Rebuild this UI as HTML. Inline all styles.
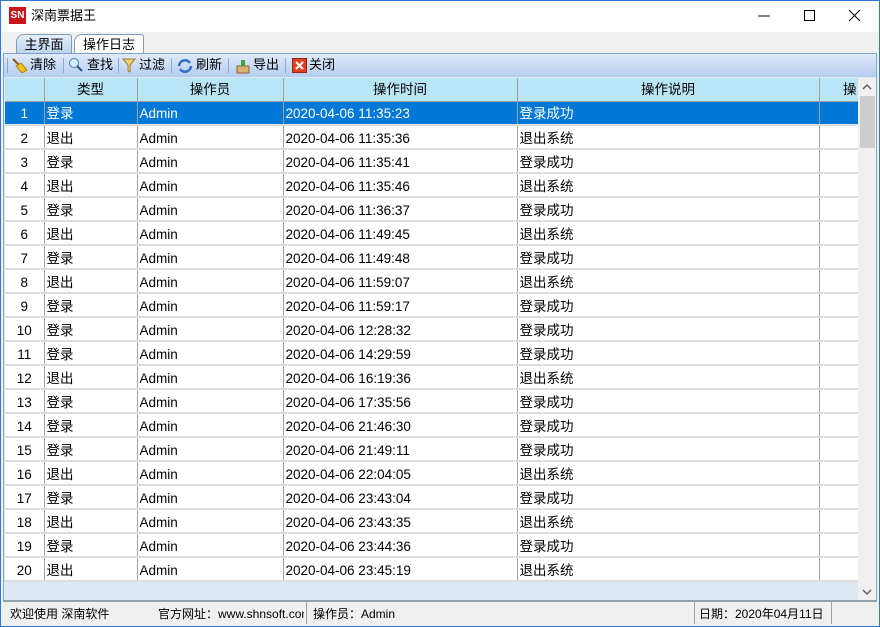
<!DOCTYPE html>
<html><head><meta charset="utf-8"><style>
*{margin:0;padding:0;box-sizing:border-box}
body{width:880px;height:627px;overflow:hidden;background:#f0f0f0;font-family:"Liberation Sans","Noto Sans CJK SC",sans-serif;font-size:13px;color:#000;position:relative}
.abs{position:absolute;line-height:16px}
#title{left:0;top:0;width:880px;height:32px;background:#fff;border:1px solid #2b79d0;border-bottom:none}
#frame{left:0;top:0;width:880px;height:627px;border:1px solid #2b79d0;pointer-events:none}
.logo{left:9px;top:7px;width:17px;height:17px;background:#c8161d;color:#fff;font-size:10px;font-weight:bold;line-height:17px;text-align:center}
.ttl{left:31px;top:8px;font-size:13px}
.tab{top:34px;height:20px;font-size:13px;line-height:20px;text-align:center;border:1px solid #7f9db9;border-bottom:none;border-radius:8px 3px 0 0}
#toolbar{left:3px;top:53px;width:874px;height:24px;background:linear-gradient(#dfeaf9,#b4cdf0);border:1px solid #7d9fd3;border-bottom:none}
.tb{top:57px;font-size:13px}
.sep{top:58px;width:1px;height:15px;background:#8ea8cc}
#grid{left:3px;top:77px;width:874px;height:524px;background:#dde8f2;border:1px solid #8a9fb8;border-top:none;overflow:hidden}
table{border-collapse:collapse;table-layout:fixed;position:absolute;left:1px;top:1px}
td{height:24px;border-right:1px solid #a0a0a0;border-bottom:2px solid #dcdcdc;background:#fff;padding:3px 2px 0;white-space:nowrap;overflow:hidden;font-size:13.5px;line-height:16px;vertical-align:middle}
td span{display:block;height:16px;line-height:16px;position:relative}
td span.c{top:0}
tr.h td{background:#b9e6f7;text-align:center;height:23px;border-bottom:1px solid #a0a0a0;padding-top:1px}
td.n{text-align:center}
tr.sel td{background:#0078d7;color:#fff}
#sb{left:858px;top:78px;width:18px;height:522px;background:#f0f0f0}
#status{left:3px;top:601px;width:874px;height:24px;border-top:1px solid #a0a0a0;background:#f0f0f0;font-size:12px}
.st{top:606px;font-size:12px}
.vs{top:602px;width:1px;height:22px;background:#a0a0a0}
</style></head><body>
<div id="title" class="abs"></div>
<div class="abs logo">SN</div>
<div class="abs ttl">深南票据王</div>
<svg class="abs" style="left:756px;top:8px" width="110" height="16"><line x1="2" y1="8" x2="14" y2="8" stroke="#000"/><rect x="48.5" y="2.5" width="10" height="10" fill="none" stroke="#000"/><path d="M93 2L104 13M104 2L93 13" stroke="#000"/></svg>
<div class="abs tab" style="left:16px;width:56px;background:linear-gradient(#e3eefb,#bcd3f0)">主界面</div>
<div class="abs tab" style="left:74px;width:70px;background:#fff;height:20px">操作日志</div>
<div id="toolbar" class="abs"></div>
<div class="abs sep" style="left:7px"></div>
<svg class="abs" style="left:11px;top:57px" width="18" height="16"><path d="M2 2L8 8" stroke="#8a5a20" stroke-width="2"/><path d="M5 9L10 6L16 13L11 16Z" fill="#f0c020" stroke="#b08000"/></svg>
<div class="abs tb" style="left:30px">清除</div>
<div class="abs sep" style="left:63px"></div>
<svg class="abs" style="left:68px;top:57px" width="16" height="16"><circle cx="6" cy="6" r="4.5" fill="#d8ecff" stroke="#4080c0"/><path d="M9 9L14 14" stroke="#305080" stroke-width="2"/></svg>
<div class="abs tb" style="left:87px">查找</div>
<div class="abs sep" style="left:118px"></div>
<svg class="abs" style="left:122px;top:58px" width="14" height="16"><path d="M1 1H13L8 7V14L6 13V7Z" fill="#f0d070" stroke="#a08030"/></svg>
<div class="abs tb" style="left:139px">过滤</div>
<div class="abs sep" style="left:171px"></div>
<svg class="abs" style="left:177px;top:58px" width="16" height="16"><path d="M2 8A6 6 0 0 1 13 5M14 8A6 6 0 0 1 3 11" fill="none" stroke="#3070c0" stroke-width="2.5"/></svg>
<div class="abs tb" style="left:196px">刷新</div>
<div class="abs sep" style="left:228px"></div>
<svg class="abs" style="left:235px;top:58px" width="16" height="16"><rect x="2" y="8" width="12" height="7" fill="#d8b070" stroke="#906030"/><path d="M6 8V2H10V8" fill="#40a040"/></svg>
<div class="abs tb" style="left:253px">导出</div>
<div class="abs sep" style="left:285px"></div>
<svg class="abs" style="left:292px;top:58px" width="15" height="15"><rect x="0.5" y="0.5" width="14" height="14" fill="#e04020" stroke="#a02010"/><path d="M4 4L11 11M11 4L4 11" stroke="#fff" stroke-width="2"/></svg>
<div class="abs tb" style="left:309px">关闭</div>
<div id="grid" class="abs">
<table>
<colgroup><col style="width:39px"><col style="width:93px"><col style="width:146px"><col style="width:234px"><col style="width:302px"><col style="width:40px"></colgroup>
<tr class="h"><td></td><td><span class="c">类型</span></td><td><span class="c">操作员</span></td><td><span class="c">操作时间</span></td><td><span class="c">操作说明</span></td><td style="text-align:right"><span class="c">操</span></td></tr>
<tr class="sel"><td class="n">1</td><td><span class="c">登录</span></td><td>Admin</td><td>2020-04-06 11:35:23</td><td><span class="c">登录成功</span></td><td></td></tr>
<tr><td class="n">2</td><td><span class="c">退出</span></td><td>Admin</td><td>2020-04-06 11:35:36</td><td><span class="c">退出系统</span></td><td></td></tr>
<tr><td class="n">3</td><td><span class="c">登录</span></td><td>Admin</td><td>2020-04-06 11:35:41</td><td><span class="c">登录成功</span></td><td></td></tr>
<tr><td class="n">4</td><td><span class="c">退出</span></td><td>Admin</td><td>2020-04-06 11:35:46</td><td><span class="c">退出系统</span></td><td></td></tr>
<tr><td class="n">5</td><td><span class="c">登录</span></td><td>Admin</td><td>2020-04-06 11:36:37</td><td><span class="c">登录成功</span></td><td></td></tr>
<tr><td class="n">6</td><td><span class="c">退出</span></td><td>Admin</td><td>2020-04-06 11:49:45</td><td><span class="c">退出系统</span></td><td></td></tr>
<tr><td class="n">7</td><td><span class="c">登录</span></td><td>Admin</td><td>2020-04-06 11:49:48</td><td><span class="c">登录成功</span></td><td></td></tr>
<tr><td class="n">8</td><td><span class="c">退出</span></td><td>Admin</td><td>2020-04-06 11:59:07</td><td><span class="c">退出系统</span></td><td></td></tr>
<tr><td class="n">9</td><td><span class="c">登录</span></td><td>Admin</td><td>2020-04-06 11:59:17</td><td><span class="c">登录成功</span></td><td></td></tr>
<tr><td class="n">10</td><td><span class="c">登录</span></td><td>Admin</td><td>2020-04-06 12:28:32</td><td><span class="c">登录成功</span></td><td></td></tr>
<tr><td class="n">11</td><td><span class="c">登录</span></td><td>Admin</td><td>2020-04-06 14:29:59</td><td><span class="c">登录成功</span></td><td></td></tr>
<tr><td class="n">12</td><td><span class="c">退出</span></td><td>Admin</td><td>2020-04-06 16:19:36</td><td><span class="c">退出系统</span></td><td></td></tr>
<tr><td class="n">13</td><td><span class="c">登录</span></td><td>Admin</td><td>2020-04-06 17:35:56</td><td><span class="c">登录成功</span></td><td></td></tr>
<tr><td class="n">14</td><td><span class="c">登录</span></td><td>Admin</td><td>2020-04-06 21:46:30</td><td><span class="c">登录成功</span></td><td></td></tr>
<tr><td class="n">15</td><td><span class="c">登录</span></td><td>Admin</td><td>2020-04-06 21:49:11</td><td><span class="c">登录成功</span></td><td></td></tr>
<tr><td class="n">16</td><td><span class="c">退出</span></td><td>Admin</td><td>2020-04-06 22:04:05</td><td><span class="c">退出系统</span></td><td></td></tr>
<tr><td class="n">17</td><td><span class="c">登录</span></td><td>Admin</td><td>2020-04-06 23:43:04</td><td><span class="c">登录成功</span></td><td></td></tr>
<tr><td class="n">18</td><td><span class="c">退出</span></td><td>Admin</td><td>2020-04-06 23:43:35</td><td><span class="c">退出系统</span></td><td></td></tr>
<tr><td class="n">19</td><td><span class="c">登录</span></td><td>Admin</td><td>2020-04-06 23:44:36</td><td><span class="c">登录成功</span></td><td></td></tr>
<tr><td class="n">20</td><td><span class="c">退出</span></td><td>Admin</td><td>2020-04-06 23:45:19</td><td><span class="c">退出系统</span></td><td></td></tr>
</table>
</div>
<div id="sb" class="abs"></div>
<div class="abs" style="left:860px;top:96px;width:15px;height:52px;background:#cdcdcd"></div>
<svg class="abs" style="left:861px;top:82px" width="12" height="10"><path d="M2 7L6 3L10 7" fill="none" stroke="#606060" stroke-width="1.5"/></svg>
<svg class="abs" style="left:861px;top:587px" width="12" height="10"><path d="M2 3L6 7L10 3" fill="none" stroke="#606060" stroke-width="1.5"/></svg>
<div id="status" class="abs"></div>
<div class="abs st" style="left:10px">欢迎使用 深南软件</div>
<div class="abs st" style="left:158px;width:146px;overflow:hidden;white-space:nowrap">官方网址：www.shnsoft.com</div>
<div class="abs vs" style="left:306px"></div>
<div class="abs st" style="left:313px">操作员：Admin</div>
<div class="abs vs" style="left:694px"></div>
<div class="abs st" style="left:699px">日期：2020年04月11日</div>
<div class="abs vs" style="left:831px"></div>
<div id="frame" class="abs"></div>
</body></html>
